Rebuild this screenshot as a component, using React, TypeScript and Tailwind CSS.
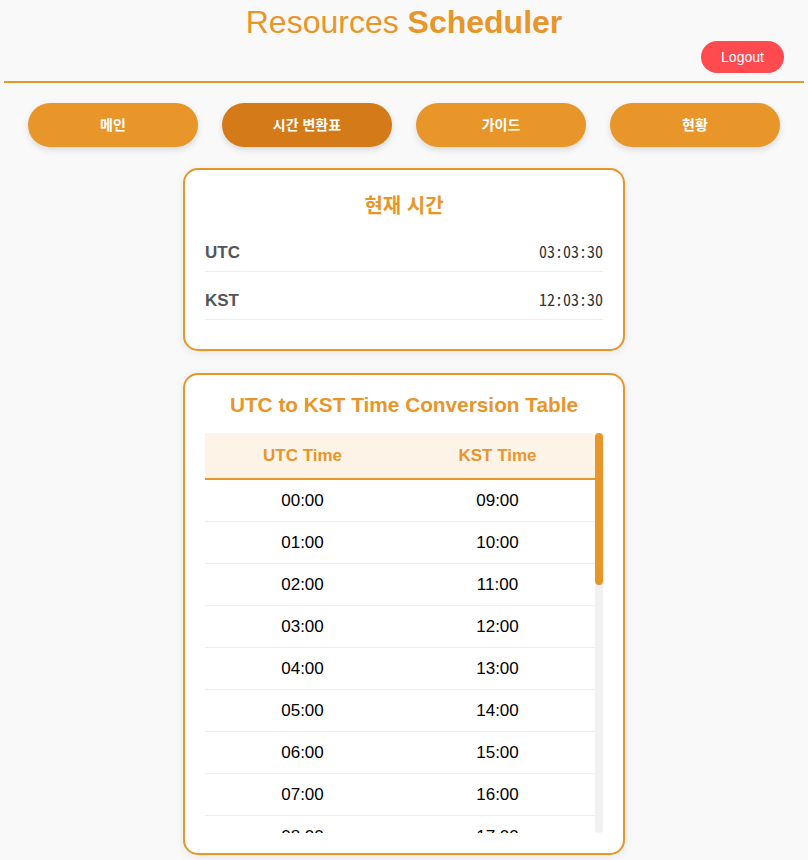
import React from "react";

const pad = (n: number) => String(n).padStart(2, "0") + ":00";

export default function App() {
  const rows = Array.from({ length: 24 }, (_, i) => [i, (i + 9) % 24]);
  const navs = ["메인", "시간 변환표", "가이드", "현황"];
  return (
    <div
      className="min-h-[860px] bg-[#f9f9f9] pb-2"
      style={{ fontFamily: '"Liberation Sans", "Noto Sans CJK KR", sans-serif' }}
    >
      <header className="mx-1 border-b-2 border-[#e8952a] pt-1 pb-2">
        <h1 className="text-center text-[32px] leading-[36px] text-[#e8952a]">
          Resources <span className="font-bold">Scheduler</span>
        </h1>
        <div className="mt-px flex justify-end pr-5">
          <button className="h-8 w-[83px] rounded-full bg-[#ff4a50] text-[14px] text-white">
            Logout
          </button>
        </div>
      </header>

      <nav className="mx-1 mt-5 flex justify-evenly">
        {navs.map((n, i) => (
          <button
            key={n}
            className={
              "h-[44px] w-[170px] rounded-full text-[14px] font-bold text-white shadow-[0_3px_6px_rgba(0,0,0,0.12)] " +
              (i === 1 ? "bg-[#d47a18]" : "bg-[#e8962a]")
            }
          >
            {n}
          </button>
        ))}
      </nav>

      <section className="mx-auto mt-[21px] w-[442px] rounded-[15px] border-2 border-[#e8952a] bg-white px-5 pt-[22px] pb-[29px] shadow-[0_2px_8px_rgba(0,0,0,0.08)]">
        <h2 className="mb-1 text-center text-[20px] font-bold leading-[28px] text-[#e8952a]">
          현재 시간
        </h2>
        {[
          ["UTC", "03:03:30"],
          ["KST", "12:03:30"],
        ].map(([k, v]) => (
          <div
            key={k}
            className="flex h-12 items-center justify-between border-b border-[#eeeeee] pt-[7px]"
          >
            <span className="pt-[3px] text-[17px] font-bold leading-[24px] text-[#555555]">{k}</span>
            <span
              className="text-[16px] font-light leading-[24px] text-[#333333]"
              style={{ fontFamily: '"Noto Sans Mono CJK KR", "Noto Sans CJK KR", monospace' }}
            >
              {v}
            </span>
          </div>
        ))}
      </section>

      <section className="mx-auto mt-[22px] w-[442px] rounded-[15px] border-2 border-[#e8952a] bg-white px-5 pt-[16px] pb-5 shadow-[0_2px_8px_rgba(0,0,0,0.08)]">
        <h2 className="mb-[14px] text-center text-[20.8px] font-bold leading-[28px] text-[#e8952a]">
          UTC to KST Time Conversion Table
        </h2>
        <div className="flex h-[400px]">
          <div className="min-w-0 flex-1 overflow-hidden">
            <div className="grid h-[47px] grid-cols-2 items-center border-b-2 border-[#e8952a] bg-[#fdf3e6] text-center text-[17px] font-bold text-[#e8952a]">
              <div>UTC Time</div>
              <div>KST Time</div>
            </div>
            {rows.map(([u, k]) => (
              <div
                key={u}
                className="grid h-[42px] grid-cols-2 items-center border-b border-[#eeeeee] text-center text-[17px] text-black"
              >
                <div>{pad(u)}</div>
                <div>{pad(k)}</div>
              </div>
            ))}
          </div>
          <div className="h-[400px] w-2 rounded-full bg-[#f1f1f1]">
            <div className="h-[152px] w-2 rounded-full bg-[#e8952a]" />
          </div>
        </div>
      </section>
    </div>
  );
}
